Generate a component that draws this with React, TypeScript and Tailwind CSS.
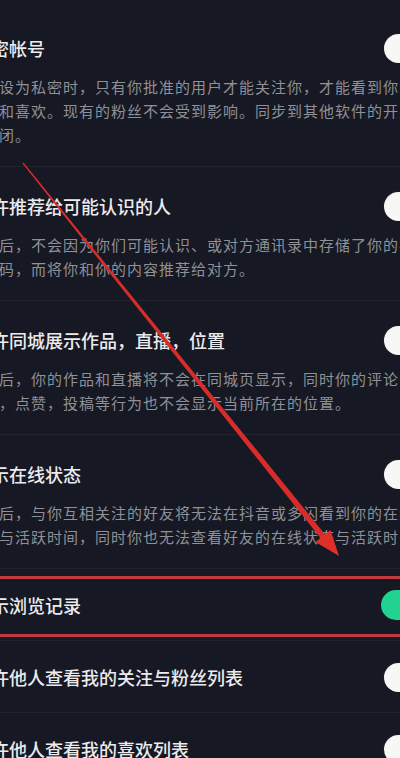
import React from "react";

type Row = { title: string; desc?: string[]; on?: boolean };

const rows: Row[] = [
  {
    title: "私密帐号",
    desc: [
      "账号设为私密时，只有你批准的用户才能关注你，才能看到你的",
      "作品和喜欢。现有的粉丝不会受到影响。同步到其他软件的开关",
      "将关闭。",
    ],
  },
  {
    title: "允许推荐给可能认识的人",
    desc: [
      "开启后，不会因为你们可能认识、或对方通讯录中存储了你的手",
      "机号码，而将你和你的内容推荐给对方。",
    ],
  },
  {
    title: "允许同城展示作品，直播，位置",
    desc: [
      "开启后，你的作品和直播将不会在同城页显示，同时你的评论",
      "动态，点赞，投稿等行为也不会显示当前所在的位置。",
    ],
  },
  {
    title: "显示在线状态",
    desc: [
      "开启后，与你互相关注的好友将无法在抖音或多闪看到你的在线",
      "状态与活跃时间，同时你也无法查看好友的在线状态与活跃时间。",
    ],
  },
  { title: "显示浏览记录", on: true },
  { title: "允许他人查看我的关注与粉丝列表" },
  { title: "允许他人查看我的喜欢列表" },
];

function Toggle({ on }: { on?: boolean }) {
  if (on) {
    return <div className="shrink-0 w-[54px] h-[30px] rounded-full bg-[#22d38f]" />;
  }
  return (
    <div className="shrink-0 w-[52px] h-[30px] rounded-full bg-[#1d1f29] p-[1px] flex items-center">
      <div className="w-[29px] h-[29px] rounded-full bg-[#f7f7f5]" />
    </div>
  );
}

export default function App() {
  return (
    <div className="relative w-[400px] h-[758px] overflow-hidden bg-[#161823] font-['Noto_Sans_CJK_SC','Noto_Sans',sans-serif] pt-[9px]">
      {rows.map((r, i) => (
        <div
          key={i}
          className={`relative ${i < rows.length - 1 ? "border-b border-[#21232d]" : ""} ${
            r.desc ? "pt-[27px] pb-[19px]" : "pt-[24px] pb-[23px]"
          }`}
        >
          {r.on && (
            <div className="absolute left-[-10px] right-[-10px] top-[7px] h-[61px] border-y-[3px] border-[#bf3a3e]" />
          )}
          <div className="flex items-center justify-between ml-[-27px] mr-[-35px] h-[24px]">
            <div className="whitespace-nowrap text-[18px] leading-[24px] font-medium text-[#ebebed]">
              {r.title}
            </div>
            <Toggle on={r.on} />
          </div>
          {r.desc && (
            <div className="mt-[15px] ml-[-33px] text-[15px] tracking-[1px] leading-[24px] text-[#909197]">
              {r.desc.map((l, j) => (
                <div key={j} className="whitespace-nowrap">
                  {l}
                </div>
              ))}
            </div>
          )}
        </div>
      ))}
      <svg
        className="absolute inset-0 pointer-events-none"
        width="400"
        height="758"
        viewBox="0 0 400 758"
      >
        <polygon
          points="22.5,163.6 23.5,162.4 325.3,534.7 320.7,538.3"
          fill="#d62c2a"
        />
        <polygon points="315.5,542 330.5,530 339,556" fill="#e02e29" />
      </svg>
    </div>
  );
}
